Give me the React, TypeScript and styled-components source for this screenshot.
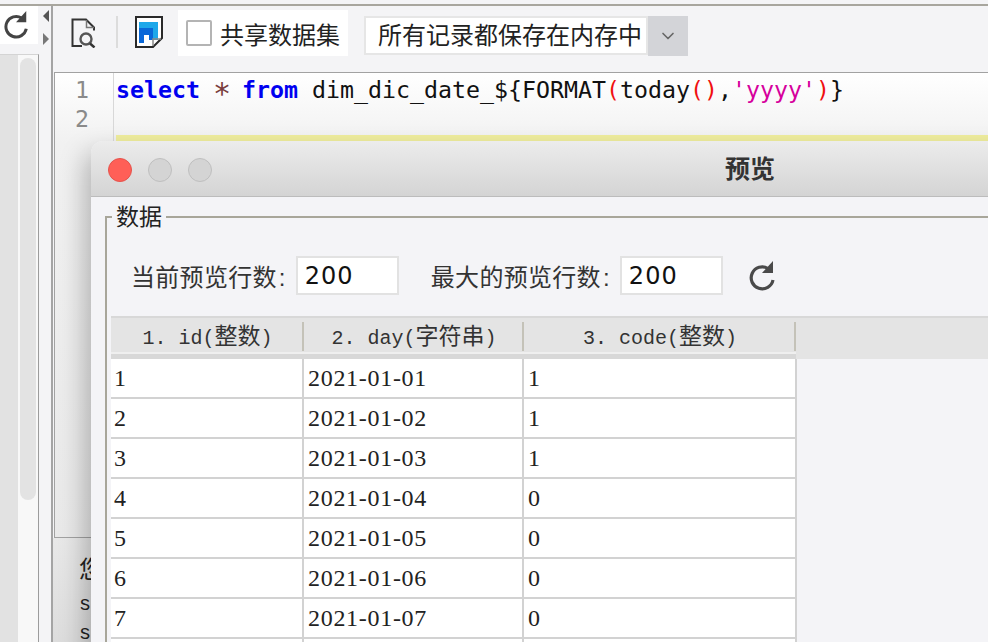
import React from 'react'
import styled, { createGlobalStyle } from 'styled-components'
import { ChevronDown } from 'lucide-react'

const SERIF = `"Liberation Serif", "Noto Sans CJK SC", serif`
const UI = `"Liberation Sans", "Noto Sans CJK SC", sans-serif`
const MONO = `"DejaVu Sans Mono", "Noto Sans CJK SC", monospace`
const TYPEWRITER = `"Liberation Mono", "Noto Sans CJK SC", monospace`

const GlobalStyle = createGlobalStyle`
  html, body {
    margin: 0;
    padding: 0;
    background: #f4f4f6;
  }
`

const Page = styled.div`
  position: relative;
  width: 988px;
  height: 642px;
  overflow: hidden;
  padding-top: 4px;
  box-sizing: border-box;
  background: #f4f4f6;
  font-family: ${UI};
`

const Frame = styled.div`
  display: flex;
  height: 638px;
  border-top: 2px solid #a8a69e;
  box-sizing: border-box;
`

const Sidebar = styled.div`
  width: 51px;
  flex: none;
  display: flex;
  flex-direction: column;
`

const SidebarTop = styled.div`
  height: 48px;
  display: flex;
  flex: none;
`

const RefreshBox = styled.div`
  width: 38px;
  height: 38px;
  background: #fff;
  display: flex;
  align-items: center;
  padding-left: 2px;
  box-sizing: border-box;
  color: #444;
`

const Arrows = styled.div`
  display: flex;
  flex-direction: column;
  gap: 11px;
  padding: 4px 0 0 5px;
`

const ArrowGlyph = styled.div<{ $dir: 'left' | 'right' }>`
  width: 0;
  height: 0;
  border-top: 6px solid transparent;
  border-bottom: 6px solid transparent;
  ${p => (p.$dir === 'left' ? 'border-right: 6px solid #555;' : 'border-left: 6px solid #777;')}
`

const ScrollPane = styled.div`
  width: 39px;
  flex: 1;
  display: flex;
  background: #e2e2e2;
  border-right: 1px solid #9c9c9c;
  border-top: 1px solid #d4d4d4;
  box-sizing: border-box;
`

const ScrollTrack = styled.div`
  margin-left: 18px;
  width: 20px;
  background: #f8f8f8;
  padding: 3px 2px 0;
  box-sizing: border-box;
`

const ScrollThumb = styled.div`
  height: 442px;
  border-radius: 8px;
  background: #e3e3e3;
`

const Main = styled.div`
  flex: 1;
  min-width: 0;
  display: flex;
  flex-direction: column;
  border-left: 2px solid #a4a4a4;
`

const Toolbar = styled.div`
  height: 66px;
  flex: none;
  display: flex;
  align-items: flex-start;
  box-sizing: border-box;
  padding: 4px 0 0 18px;
`

const ToolIcon = styled.svg<{ $top: number }>`
  flex: none;
  margin-top: ${p => p.$top}px;
`

const ToolSeparator = styled.div`
  width: 2px;
  height: 32px;
  margin: 6px 17px 0 19px;
  background: #dcdcdc;
`

const CheckGroup = styled.label`
  width: 170px;
  height: 46px;
  margin-left: 15px;
  background: #fff;
  display: flex;
  align-items: center;
  gap: 8px;
  padding-left: 8px;
  box-sizing: border-box;
  font-size: 24px;
  color: #222;
`

const CheckSquare = styled.span`
  width: 26px;
  height: 26px;
  border: 2px solid #b4b4b4;
  border-radius: 2px;
  box-sizing: border-box;
  background: #fff;
`

const Select = styled.div`
  width: 324px;
  height: 40px;
  margin: 6px 0 0 16px;
  display: flex;
  box-sizing: border-box;
`

const SelectValue = styled.div`
  width: 284px;
  height: 39px;
  background: #fff;
  border: 2px solid #e6e6e6;
  box-sizing: border-box;
  padding-left: 12px;
  font-size: 24px;
  line-height: 35px;
  color: #222;
  white-space: nowrap;
`

const SelectButton = styled.div`
  width: 40px;
  background: #d3d4d8;
  display: flex;
  align-items: center;
  justify-content: center;
  color: #666;
`

const Editor = styled.div`
  height: 466px;
  flex: none;
  margin-left: 1px;
  display: flex;
  border: 1px solid #a2a2a2;
  border-right: none;
  box-sizing: border-box;
  background: linear-gradient(#ffffff 0, #f1f1f1 70px, #e9e9e9 100%);
`

const Gutter = styled.div`
  width: 59px;
  flex: none;
  border-right: 1px solid #d8d8d8;
  box-sizing: border-box;
  padding: 2px 24px 0 0;
  text-align: right;
  font: 23.25px/29px ${MONO};
  color: #8a8a8a;
`

const CodeArea = styled.div`
  flex: 1;
  padding: 2px 0 0 2px;
  font: 23.25px/29px ${MONO};
  color: #111;
  white-space: pre;
`

const CodeLine = styled.div`
  height: 29px;
`

const Keyword = styled.span`
  color: #0000f0;
  font-weight: 700;
`

const Operator = styled.span`
  display: inline-block;
  width: 14px;
  text-align: center;
  font-size: 30px;
  line-height: 0;
  color: #7a3e3e;
  transform: translate(-1px, 6px);
`

const Paren = styled.span`
  color: #f01010;
`

const Str = styled.span`
  color: #d6009c;
`

const CurrentLine = styled.div`
  height: 8px;
  margin-top: 2px;
  background: #f0ee9e;
`

const Console = styled.div`
  flex: 1;
  padding: 16px 0 0 26px;
  background: linear-gradient(#e8e8e8, #dcdcdc);
  font: 20px/29px ${TYPEWRITER};
  color: #222;
`

const ConsoleHeading = styled.div`
  font-size: 24px;
  line-height: 36px;
  white-space: nowrap;
`

const ConsoleLine = styled.div`
  white-space: nowrap;
`

const Dialog = styled.div`
  position: absolute;
  left: 91px;
  top: 141px;
  width: 1318px;
  height: 560px;
  border-radius: 12px 0 0 0;
  background: #f4f4f7;
  box-shadow: -6px 12px 26px rgba(0, 0, 0, 0.26);
  display: flex;
  flex-direction: column;
  overflow: hidden;
`

const TitleBar = styled.div`
  position: relative;
  height: 56px;
  flex: none;
  display: flex;
  align-items: center;
  justify-content: center;
  padding-bottom: 3px;
  border-bottom: 1px solid #bcbcbc;
  box-sizing: border-box;
  background: linear-gradient(#ececec, #d4d4d4);
`

const Lights = styled.div`
  position: absolute;
  left: 17px;
  top: 17px;
  display: flex;
  gap: 16px;
`

const Light = styled.span<{ $red?: boolean }>`
  width: 24px;
  height: 24px;
  border-radius: 50%;
  box-sizing: border-box;
  background: ${p => (p.$red ? '#ff5f57' : '#d4d4d4')};
  border: 1px solid ${p => (p.$red ? '#e5534c' : '#bfbfbf')};
`

const Title = styled.div`
  font-size: 25px;
  font-weight: 700;
  color: #333;
`

const DataGroup = styled.fieldset`
  margin: 7px 0 0 14px;
  padding: 0 0 0 4px;
  border: none;
  border-top: 2px solid #a8a69a;
  border-left: 2px solid #a8a69a;
  flex: 1;
  min-width: 0;

  legend {
    margin-left: 1px;
    padding: 0 4px;
    font-size: 23px;
    line-height: 26px;
    color: #222;
  }
`

const PreviewControls = styled.div`
  display: flex;
  align-items: center;
  height: 39px;
  margin-top: 26px;
  padding-left: 20px;
  font-size: 24px;
  letter-spacing: 0.3px;
  color: #333;
`

const LabelText = styled.span<{ $gap: number }>`
  margin-right: ${p => p.$gap}px;
  white-space: nowrap;
`

const Colon = styled.span`
  margin-left: 2px;
`

const CountInput = styled.div`
  width: 103px;
  height: 39px;
  margin-right: 32px;
  background: #fff;
  border: 2px solid #e2e2e2;
  box-sizing: border-box;
  padding-left: 7px;
  font: 24px/37px "DejaVu Sans", sans-serif;
  letter-spacing: 1px;
  color: #111;
`

const ReloadButton = styled.div`
  display: flex;
  margin-left: -8px;
  color: #4a4a4a;
`

const Table = styled.div`
  margin-top: 21px;
  display: flex;
  flex-direction: column;
  border-top: 2px solid #d8d8d8;
`

const HeaderRow = styled.div`
  height: 41px;
  display: grid;
  grid-template-columns: 193px 220px 272px 1fr;
  background: #e4e4e4;
  font: 20px/40px ${TYPEWRITER};
  color: #333;
`

const HeaderCell = styled.div`
  position: relative;
  text-align: center;
  white-space: pre;
  line-height: 40px;
  box-shadow: inset 0 -5px 0 #d8d8d8, inset 0 -7px 0 #efefef;

  &::after {
    content: '';
    position: absolute;
    right: 0;
    top: 4px;
    width: 2px;
    height: 29px;
    background: #c4c2b8;
  }
`

const HeaderCjk = styled.span`
  font-size: 23px;
`

const HeaderGap = styled.div``

const BodyRow = styled.div`
  height: 40px;
  width: 686px;
  display: grid;
  grid-template-columns: 193px 220px 273px;
  box-sizing: border-box;
`

const Cell = styled.div`
  background: #fff;
  box-sizing: border-box;
  border-right: 2px solid #d2d2d2;
  border-bottom: 2px solid #d2d2d2;
  padding-left: 3px;
  font: 24px/38px ${SERIF};
  color: #222;
`

const DateCell = styled(Cell)`
  padding-left: 4px;
  letter-spacing: 0.7px;
`

const CodeCell = styled(Cell)`
  padding-left: 4px;
`

const ReloadIcon = ({ size }: { size: number }) => (
  <svg width={size} height={size} viewBox="0 0 30 30">
    <path d="M21 7.5A11 11 0 1 0 26 19" fill="none" stroke="currentColor" strokeWidth="3.2" />
    <path d="M26 0v12H15z" fill="currentColor" />
  </svg>
)

const FileSearchIcon = () => (
  <ToolIcon $top={8} width="26" height="30" viewBox="0 0 26 30">
    <path d="M11 28H1.5V1.5H15l8 8v3" fill="none" stroke="#333" strokeWidth="2" />
    <path d="M15.5 2v7.5H23" fill="none" stroke="#777" strokeWidth="1.5" />
    <circle cx="15" cy="21" r="5.5" fill="none" stroke="#555" strokeWidth="2.4" />
    <path d="M19 25.5l4.5 4" stroke="#333" strokeWidth="2.4" />
  </ToolIcon>
)

const SaveIcon = () => (
  <ToolIcon $top={6} width="28" height="32" viewBox="0 0 28 32">
    <path d="M1 1h26v21l-9 9H1z" fill="#fff" stroke="#2a2a2a" strokeWidth="2" />
    <path d="M4 6h19v18h-5V12H4z" fill="#1ea8ea" />
    <path d="M4 12h14v12h-4v-5h-5v8H4z" fill="#0a68d8" />
    <path d="M18 30v-7h8" fill="none" stroke="#8a8a8a" strokeWidth="1.5" />
  </ToolIcon>
)

const rows = [
  ['1', '2021-01-01', '1'],
  ['2', '2021-01-02', '1'],
  ['3', '2021-01-03', '1'],
  ['4', '2021-01-04', '0'],
  ['5', '2021-01-05', '0'],
  ['6', '2021-01-06', '0'],
  ['7', '2021-01-07', '0'],
  ['', '', '']
]

const App: React.FC = () => {
  return (
    <Page>
      <GlobalStyle />
      <Frame>
        <Sidebar>
          <SidebarTop>
            <RefreshBox>
              <ReloadIcon size={28} />
            </RefreshBox>
            <Arrows>
              <ArrowGlyph $dir="left" />
              <ArrowGlyph $dir="right" />
            </Arrows>
          </SidebarTop>
          <ScrollPane>
            <ScrollTrack>
              <ScrollThumb />
            </ScrollTrack>
          </ScrollPane>
        </Sidebar>
        <Main>
          <Toolbar>
            <FileSearchIcon />
            <ToolSeparator />
            <SaveIcon />
            <CheckGroup>
              <CheckSquare />
              共享数据集
            </CheckGroup>
            <Select>
              <SelectValue>所有记录都保存在内存中</SelectValue>
              <SelectButton>
                <ChevronDown size={20} strokeWidth={2} />
              </SelectButton>
            </Select>
          </Toolbar>
          <Editor>
            <Gutter>
              1
              <br />2
            </Gutter>
            <CodeArea>
              <CodeLine>
                <Keyword>select</Keyword> <Operator>*</Operator> <Keyword>from</Keyword> dim_dic_date_${'{'}FORMAT
                <Paren>(</Paren>today<Paren>()</Paren>,<Str>'yyyy'</Str>
                <Paren>)</Paren>
                {'}'}
              </CodeLine>
              <CodeLine />
              <CurrentLine />
            </CodeArea>
          </Editor>
          <Console>
            <ConsoleHeading>您</ConsoleHeading>
            <ConsoleLine>se</ConsoleLine>
            <ConsoleLine>se</ConsoleLine>
          </Console>
        </Main>
      </Frame>

      <Dialog>
        <TitleBar>
          <Lights>
            <Light $red />
            <Light />
            <Light />
          </Lights>
          <Title>预览</Title>
        </TitleBar>
        <DataGroup>
          <legend>数据</legend>
          <PreviewControls>
            <LabelText $gap={10}>
              当前预览行数<Colon>:</Colon>
            </LabelText>
            <CountInput>200</CountInput>
            <LabelText $gap={10}>
              最大的预览行数<Colon>:</Colon>
            </LabelText>
            <CountInput>200</CountInput>
            <ReloadButton>
              <ReloadIcon size={30} />
            </ReloadButton>
          </PreviewControls>
          <Table>
            <HeaderRow>
              <HeaderCell>
                1. id(<HeaderCjk>整数</HeaderCjk>)
              </HeaderCell>
              <HeaderCell>
                2. day(<HeaderCjk>字符串</HeaderCjk>)
              </HeaderCell>
              <HeaderCell>
                3. code(<HeaderCjk>整数</HeaderCjk>)
              </HeaderCell>
              <HeaderGap />
            </HeaderRow>
            {rows.map((row, i) => (
              <BodyRow key={i}>
                <Cell>{row[0]}</Cell>
                <DateCell>{row[1]}</DateCell>
                <CodeCell>{row[2]}</CodeCell>
              </BodyRow>
            ))}
          </Table>
        </DataGroup>
      </Dialog>
    </Page>
  )
}

export default App
